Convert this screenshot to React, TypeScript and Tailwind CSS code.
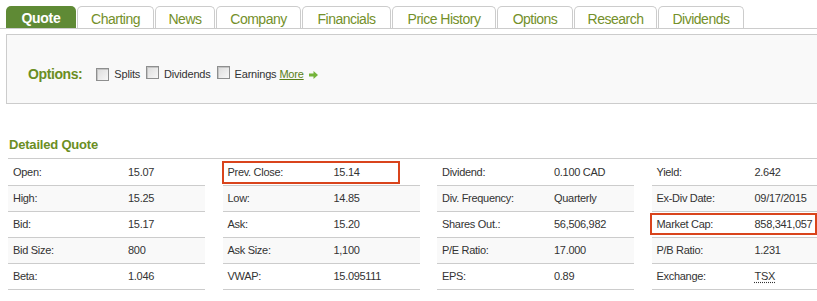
import React from "react";

const tabs = [
  { label: "Quote", w: "w-[70px]", active: true },
  { label: "Charting", w: "w-[77px]" },
  { label: "News", w: "w-[60px]" },
  { label: "Company", w: "w-[85px]" },
  { label: "Financials", w: "w-[89px]" },
  { label: "Price History", w: "w-[104px]" },
  { label: "Options", w: "w-[76px]" },
  { label: "Research", w: "w-[83px]" },
  { label: "Dividends", w: "w-[86px]" },
];

type Row = { k: string; v: React.ReactNode; hl?: string };

const columns: { lw: string; rows: Row[] }[] = [
  {
    lw: "w-[115px]",
    rows: [
      { k: "Open:", v: "15.07" },
      { k: "High:", v: "15.25" },
      { k: "Bid:", v: "15.17" },
      { k: "Bid Size:", v: "800" },
      { k: "Beta:", v: "1.046" },
    ],
  },
  {
    lw: "w-[106px]",
    rows: [
      { k: "Prev. Close:", v: "15.14", hl: "left-[-1px] top-[1px] w-[178px] h-[23px]" },
      { k: "Low:", v: "14.85" },
      { k: "Ask:", v: "15.20" },
      { k: "Ask Size:", v: "1,100" },
      { k: "VWAP:", v: "15.095111" },
    ],
  },
  {
    lw: "w-[112px]",
    rows: [
      { k: "Dividend:", v: "0.100 CAD" },
      { k: "Div. Frequency:", v: "Quarterly" },
      { k: "Shares Out.:", v: "56,506,982" },
      { k: "P/E Ratio:", v: "17.000" },
      { k: "EPS:", v: "0.89" },
    ],
  },
  {
    lw: "w-[98px]",
    rows: [
      { k: "Yield:", v: "2.642" },
      { k: "Ex-Div Date:", v: "09/17/2015" },
      { k: "Market Cap:", v: "858,341,057", hl: "left-[-2px] top-[1px] w-[167px] h-[22px]" },
      { k: "P/B Ratio:", v: "1.231" },
      {
        k: "Exchange:",
        v: <span className="underline decoration-dotted decoration-[#333] underline-offset-2">TSX</span>,
      },
    ],
  },
];

function Checkbox() {
  return (
    <span className="inline-block h-[13px] w-[13px] border border-[#8e8f8f] bg-gradient-to-br from-[#dcdcdc] to-[#f7f7f7] shadow-[inset_1px_1px_0_#c4c4c4]" />
  );
}

export default function App() {
  return (
    <div className="h-[301px] w-[817px] overflow-hidden bg-white font-['Liberation_Sans',Arial,sans-serif] text-[#333]">
      {/* tabs */}
      <div className="flex gap-[1px] border-b border-[#cccccc] pl-[6px] pt-[6px]">
        {tabs.map((t) =>
          t.active ? (
            <div
              key={t.label}
              className={`${t.w} flex h-[22px] items-center justify-center rounded-t-[5px] bg-[#5f8a35] pt-[3px] text-[14px] font-bold tracking-[-0.3px] text-white`}
            >
              {t.label}
            </div>
          ) : (
            <div
              key={t.label}
              className={`${t.w} flex h-[22px] items-center justify-center rounded-t-[5px] border border-b-0 border-[#cccccc] bg-white pt-[3px] text-[14px] tracking-[-0.5px] text-[#74902a]`}
            >
              {t.label}
            </div>
          )
        )}
      </div>

      {/* options box */}
      <div className="ml-[6px] mt-[5px] h-[70px] w-[830px] border border-[#cccccc] bg-[#f9f9f9] pl-[21px] pt-[29px]">
        <div className="flex items-center">
          <span className="text-[14px] font-bold tracking-[-0.4px] text-[#6b8e23]">Options:</span>
          <div className="ml-[14px] flex items-center text-[11px] tracking-[-0.2px] text-[#333]">
            <Checkbox />
            <span className="ml-[5px]">Splits</span>
            <span className="ml-[6px]"><Checkbox /></span>
            <span className="ml-[5px]">Dividends</span>
            <span className="ml-[6px]"><Checkbox /></span>
            <span className="ml-[5px]">Earnings</span>
            <a className="ml-[3px] text-[#5a8018] underline underline-offset-1">More</a>
            <svg className="ml-[5px]" width="9" height="8" viewBox="0 0 9 8">
              <polygon points="0,2.5 4.5,2.5 4.5,0 9,4 4.5,8 4.5,5.5 0,5.5" fill="#74b43a" />
            </svg>
          </div>
        </div>
      </div>

      {/* detailed quote */}
      <div className="ml-[8px] mt-[31px] w-[850px]">
        <div className="border-b border-[#cccccc] pb-[3px] pl-[1px] text-[13px] font-bold tracking-[-0.2px] text-[#6b8e23]">
          Detailed Quote
        </div>
        <div className="mt-[1px] flex gap-x-[17.5px]">
          {columns.map((col, ci) => (
            <div key={ci} className="w-[197px]">
              {col.rows.map((r, ri) => (
                <div
                  key={r.k}
                  className={`relative flex h-[26px] items-center border-b border-[#cccccc] pl-[5px] text-[11px] tracking-[-0.3px] ${
                    ri % 2 === 1 ? "bg-[#f9f9f9]" : "bg-white"
                  }`}
                >
                  <span className={`${col.lw} shrink-0`}>{r.k}</span>
                  <span>{r.v}</span>
                  {r.hl ? (
                    <span className={`absolute ${r.hl} border-2 border-[#d9441c]`} />
                  ) : null}
                </div>
              ))}
            </div>
          ))}
        </div>
      </div>
    </div>
  );
}
